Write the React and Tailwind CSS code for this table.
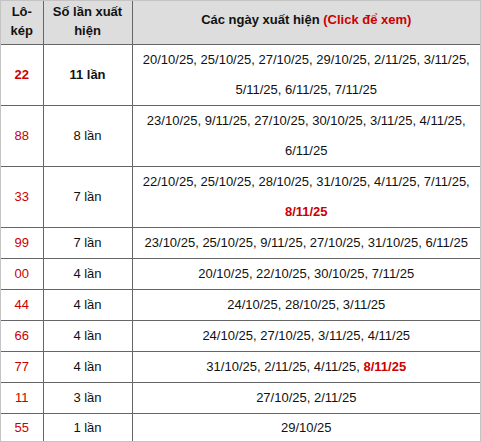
const rows = [
  { so: "22", count: "11 lần", bold: true, dates: "20/10/25, 25/10/25, 27/10/25, 29/10/25, 2/11/25, 3/11/25, 5/11/25, 6/11/25, 7/11/25" },
  { so: "88", count: "8 lần", dates: "23/10/25, 9/11/25, 27/10/25, 30/10/25, 3/11/25, 4/11/25, 6/11/25" },
  { so: "33", count: "7 lần", dates: "22/10/25, 25/10/25, 28/10/25, 31/10/25, 4/11/25, 7/11/25,", hot: "8/11/25" },
  { so: "99", count: "7 lần", dates: "23/10/25, 25/10/25, 9/11/25, 27/10/25, 31/10/25, 6/11/25" },
  { so: "00", count: "4 lần", dates: "20/10/25, 22/10/25, 30/10/25, 7/11/25" },
  { so: "44", count: "4 lần", dates: "24/10/25, 28/10/25, 3/11/25" },
  { so: "66", count: "4 lần", dates: "24/10/25, 27/10/25, 3/11/25, 4/11/25" },
  { so: "77", count: "4 lần", dates: "31/10/25, 2/11/25, 4/11/25,", hot: "8/11/25" },
  { so: "11", count: "3 lần", dates: "27/10/25, 2/11/25" },
  { so: "55", count: "1 lần", dates: "29/10/25", last: true },
];

export default function App() {
  return (
    <div className="w-[481px] bg-white font-['Liberation_Sans',Arial,sans-serif] text-[13px] text-[#111]">
      <div className="border border-[#c4c4c4]">
        <table className="w-full table-fixed border-collapse border-hidden">
          <colgroup>
            <col className="w-[42px]" />
            <col className="w-[89px]" />
            <col />
          </colgroup>
          <thead>
            <tr className="bg-[#dddddd]">
              <th className="border border-[#666] pt-[1px] pb-[4px] px-0 leading-[19px] font-bold align-middle">
                Lô-<br />kép
              </th>
              <th className="border border-[#666] pt-[1px] pb-[4px] px-0 leading-[19px] font-bold align-middle">
                Số lần xuất<br />hiện
              </th>
              <th className="border border-[#666] pt-[1px] pb-[8px] px-1 leading-[19px] font-bold align-middle">
                Các ngày xuất hiện <span className="text-[#cc0000]">(Click để xem)</span>
              </th>
            </tr>
          </thead>
          <tbody>
            {rows.map((r) => {
              const lh = r.last ? "leading-[27px]" : "leading-[30px]";
              return (
                <tr key={r.so}>
                  <td className={`border border-[#666] text-center ${lh} text-[#cc0000] ${r.bold ? "font-bold" : ""}`}>
                    {r.so}
                  </td>
                  <td className={`border border-[#666] text-center ${lh} ${r.bold ? "font-bold" : ""}`}>
                    {r.count}
                  </td>
                  <td className={`border border-[#666] text-center ${lh} px-2`}>
                    {r.dates}
                    {r.hot && (
                      <>
                        {" "}
                        <span className="font-bold text-[#cc0000]">{r.hot}</span>
                      </>
                    )}
                  </td>
                </tr>
              );
            })}
          </tbody>
        </table>
      </div>
    </div>
  );
}
